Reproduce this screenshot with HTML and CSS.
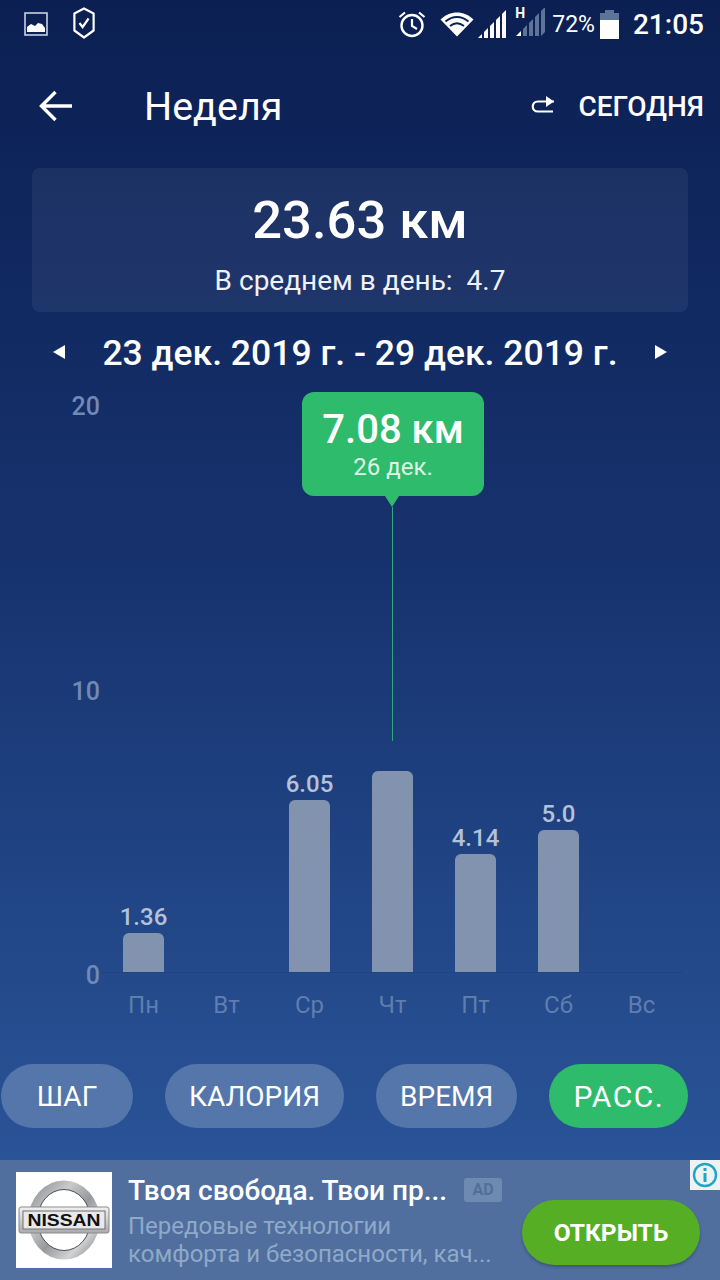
FILE: index.html
```html
<!DOCTYPE html>
<html lang="ru">
<head>
    <meta charset="UTF-8" />
    <meta name="viewport" content="width=device-width, initial-scale=1.0" />
    <title>Неделя</title>
    <link rel="stylesheet" href="styles.css">
</head>
<body>
    <div class="screen">
        <!-- Status bar -->
        <div class="status-bar">
            <div class="status-left">
                <svg class="ic-image" width="24" height="24" viewBox="0 0 24 24">
                    <rect x="1" y="1" width="22" height="22" fill="none" stroke="#c9d2e2" stroke-width="1.6"/>
                    <path d="M3 20v-5l4-3 4 2 3-3 4 1 3 4v4z" fill="#fff"/>
                </svg>
                <svg class="ic-shield" width="22" height="32" viewBox="0 0 24 32" preserveAspectRatio="none">
                    <path d="M12 1.500 22.500 6.500v17L12 30.500 1.500 23.500v-17z" fill="none" stroke="#fff" stroke-width="2.400" stroke-linejoin="round"/>
                    <path d="M7 16l3.500 4L17 11.500" fill="none" stroke="#fff" stroke-width="2.400"/>
                </svg>
            </div>
            <div class="status-right">
                <svg class="ic-alarm" width="28" height="28" viewBox="0 0 28 28">
                    <circle cx="14" cy="15.500" r="10.500" fill="none" stroke="#fff" stroke-width="2.400"/>
                    <path d="M14 9v7l5 3M1.500 7 7 2.500M26.500 7 21 2.500" fill="none" stroke="#fff" stroke-width="2.200"/>
                </svg>
                <svg class="ic-wifi" width="34" height="26" viewBox="0 0 34 26">
                    <path d="M17 25.500 0.500 8.500C10 -1 24 -1 33.500 8.500z" fill="#fff"/>
                    <path d="M5.500 10.500c7-6 16-6 23 0M10 15c4.500-3.500 9.500-3.500 14 0" fill="none" stroke="#0c2053" stroke-width="1.800"/>
                </svg>
                <svg class="ic-signal" width="28" height="28" viewBox="0 0 28 28">
                    <path d="M0 28 4 24v4zM6 28v-6l4-4v10zM12 28V16l4-4v16zM18 28V10l4-4v22zM24 28V4l4-4v28z" fill="#fff"/>
                </svg>
                <div class="signal-h">
                    <span class="h-mark">H</span>
                    <svg width="30" height="28" viewBox="0 0 30 28">
                        <path d="M0 28 5 23v5z" fill="#fff"/>
                        <path d="M7 28v-7l4-4v11zM13 28V15l4-4v17zM19 28V9l4-4v23zM25 28V3l4-4v25z" fill="#5f7398"/>
                    </svg>
                </div>
                <span class="battery-pct">72%</span>
                <div class="battery"><div class="battery-fill"></div></div>
                <span class="clock">21:05</span>
            </div>
        </div>

        <!-- Toolbar -->
        <div class="toolbar">
            <svg class="back" width="34" height="32" viewBox="0 0 34 32">
                <path d="M33 16H3M16.500 2 2.500 16l14 14" fill="none" stroke="#fff" stroke-width="3.400"/>
            </svg>
            <h1 class="title">Неделя</h1>
            <svg class="today-ic" width="24" height="18" viewBox="0 0 24 18">
                <path d="M23 5.500H7C0 5.500 0 15.500 7 15.500H22" fill="none" stroke="#fff" stroke-width="2.200"/>
                <path d="M15 0l8 5.500-8 5.500z" fill="#fff"/>
            </svg>
            <span class="today">СЕГОДНЯ</span>
        </div>

        <!-- Summary -->
        <div class="summary">
            <div class="summary-total">23.63 км</div>
            <div class="summary-avg">В среднем в день:&nbsp; 4.7</div>
        </div>

        <div class="date-row">
            <span class="tri tri-left"></span>
            <span class="date-text">23 дек. 2019 г. - 29 дек. 2019 г.</span>
            <span class="tri tri-right"></span>
        </div>

        <!-- Chart -->
        <div class="chart">
            <div class="y-axis">
                <span>20</span>
                <span>10</span>
                <span>0</span>
            </div>
            <div class="plot">
                <div class="col"><span class="val">1.36</span><div class="bar" style="height: 39px"></div></div>
                <div class="col"></div>
                <div class="col"><span class="val">6.05</span><div class="bar" style="height: 172px"></div></div>
                <div class="col"><div class="bar" style="height: 201px"></div></div>
                <div class="col"><span class="val">4.14</span><div class="bar" style="height: 118px"></div></div>
                <div class="col"><span class="val">5.0</span><div class="bar" style="height: 142px"></div></div>
                <div class="col"></div>

                <div class="guide"></div>
                <div class="tooltip">
                    <div class="tooltip-val">7.08 км</div>
                    <div class="tooltip-date">26 дек.</div>
                </div>
            </div>
            <div class="days">
                <span>Пн</span><span>Вт</span><span>Ср</span><span>Чт</span><span>Пт</span><span>Сб</span><span>Вс</span>
            </div>
        </div>

        <!-- Tabs -->
        <div class="tabs">
            <div class="tab">ШАГ</div>
            <div class="tab">КАЛОРИЯ</div>
            <div class="tab">ВРЕМЯ</div>
            <div class="tab tab-active">РАСС.</div>
        </div>

        <!-- Ad -->
        <div class="ad">
            <div class="ad-logo">
                <svg width="96" height="96" viewBox="0 0 96 96">
                    <defs>
                        <linearGradient id="chrome" x1="0" y1="0" x2="1" y2="1">
                            <stop offset="0" stop-color="#8e8f93"/>
                            <stop offset="0.3" stop-color="#c9cacc"/>
                            <stop offset="0.55" stop-color="#98999d"/>
                            <stop offset="0.8" stop-color="#d2d3d5"/>
                            <stop offset="1" stop-color="#8b8c90"/>
                        </linearGradient>
                        <linearGradient id="band" x1="0" y1="0" x2="0" y2="1">
                            <stop offset="0" stop-color="#f2f2f3"/>
                            <stop offset="1" stop-color="#a9aaad"/>
                        </linearGradient>
                    </defs>
                    <ellipse cx="48" cy="48" rx="31" ry="35" fill="none" stroke="url(#chrome)" stroke-width="9"/>
                    <ellipse cx="48" cy="48" rx="26.500" ry="30.500" fill="none" stroke="#4c4d51" stroke-width="1"/>
                    <rect x="3" y="35" width="90" height="26" rx="2" fill="url(#band)" stroke="#8a8b8f" stroke-width="1"/>
                    <rect x="7" y="39" width="82" height="18" fill="#e9e9ea" stroke="#707175" stroke-width="1"/>
                    <text class="nissan" x="48" y="54" text-anchor="middle" textLength="73" lengthAdjust="spacingAndGlyphs">NISSAN</text>
                </svg>
            </div>
            <div class="ad-text">
                <div class="ad-head">
                    <span class="ad-title">Твоя свобода. Твои пр...</span>
                    <span class="ad-badge">AD</span>
                </div>
                <div class="ad-body">Передовые технологии</div>
                <div class="ad-body">комфорта и безопасности, кач...</div>
            </div>
            <div class="ad-btn">ОТКРЫТЬ</div>
            <div class="ad-info">
                <svg width="26" height="26" viewBox="0 0 26 26">
                    <circle cx="13" cy="13" r="11" fill="none" stroke="#1fa6c4" stroke-width="2.400"/>
                    <path d="M11.500 6h3v3h-3zM11.500 11h3v9h-3z" fill="#1fa6c4"/>
                </svg>
            </div>
        </div>
    </div>
</body>
</html>
```

FILE: styles.css
```css
:root {
    --green: #2fbb6c;
    --axis: #6f8ab5;
    --day: #5f7eae;
}

body {
    margin: 0;
    padding: 0;
    font-family: Roboto, "Noto Sans", sans-serif;
    color: white;
}

.screen {
    width: 720px;
    height: 1280px;
    overflow: hidden;
    position: relative;
    background: linear-gradient(180deg, #0b1f52 0%, #17336f 45%, #2a5599 92%);
}

/* Status bar */
.status-bar {
    height: 48px;
    display: flex;
    justify-content: space-between;
    align-items: center;
    padding: 0 16px 0 24px;
}

.status-left {
    display: flex;
    align-items: center;
    gap: 25px;
}

.ic-image {
    margin-bottom: 1px;
}

.ic-shield {
    margin-bottom: 2px;
}

.status-right {
    display: flex;
    align-items: center;
}

.ic-alarm {
    margin-right: 14px;
}

.ic-wifi {
    margin-right: 4px;
}

.signal-h {
    position: relative;
    margin-left: 10px;
    margin-right: 6px;
}

.h-mark {
    position: absolute;
    top: -3px;
    left: -1px;
    font-size: 14px;
    font-weight: 700;
}

.battery-pct {
    font-size: 23px;
    margin-right: 5px;
}

.battery {
    width: 19px;
    height: 26px;
    margin-top: 3px;
    background: #5f7398;
    display: flex;
    align-items: flex-end;
    position: relative;
}

.battery::before {
    content: "";
    position: absolute;
    top: -3px;
    left: 5px;
    width: 9px;
    height: 3px;
    background: #5f7398;
}

.battery-fill {
    width: 100%;
    height: 19px;
    background: white;
}

.clock {
    font-size: 28px;
    font-weight: 500;
    margin-left: 14px;
}

/* Toolbar */
.toolbar {
    height: 116px;
    display: flex;
    align-items: center;
    padding: 0 16px 0 39px;
}

.title {
    flex: 1;
    margin: 0 0 0 71px;
    font-size: 39.500px;
    font-weight: 400;
}

.today-ic {
    margin-right: 23px;
    margin-bottom: 2px;
}

.today {
    font-size: 28px;
    font-weight: 500;
}

/* Summary */
.summary {
    height: 144px;
    margin: 4px 32px 0;
    box-sizing: border-box;
    padding-top: 22px;
    text-align: center;
    background-color: rgba(255, 255, 255, 0.06);
    border-radius: 8px;
}

.summary-total {
    font-size: 52.500px;
    font-weight: 500;
    line-height: 60px;
}

.summary-avg {
    margin-top: 15px;
    font-size: 28px;
    line-height: 32px;
    color: #eef1f6;
}

.date-row {
    height: 79px;
    display: flex;
    justify-content: space-between;
    align-items: center;
    padding: 0 53px;
}

.date-text {
    padding-top: 3px;
    font-size: 35.500px;
    font-weight: 500;
}

.tri {
    width: 0;
    height: 0;
    border-top: 7px solid transparent;
    border-bottom: 7px solid transparent;
}

.tri-left {
    border-right: 12px solid white;
}

.tri-right {
    border-left: 12px solid white;
}

/* Chart */
.chart {
    height: 673px;
    display: grid;
    grid-template-columns: 102px 581px;
    grid-template-rows: 581px auto;
}

.y-axis {
    grid-row: 1 / 3;
    height: 597px;
    margin-top: 2px;
    display: flex;
    flex-direction: column;
    justify-content: space-between;
    align-items: flex-end;
    padding-right: 2px;
    font-size: 25px;
    font-weight: 500;
    line-height: 28px;
    color: var(--axis);
}

.plot {
    position: relative;
    display: grid;
    grid-template-columns: repeat(7, 83px);
    height: 581px;
}

.col {
    display: flex;
    flex-direction: column;
    justify-content: flex-end;
    align-items: center;
    border-bottom: 1px solid rgba(20, 50, 110, 0.25);
    margin-bottom: -1px;
}

.bar {
    width: 41px;
    background-color: #8293b0;
    border-radius: 6px 6px 0 0;
}

.val {
    margin-bottom: 2px;
    font-size: 24px;
    font-weight: 500;
    line-height: 28px;
    color: #b4c2d9;
}

.guide {
    position: absolute;
    left: 290px;
    top: 116px;
    width: 1px;
    height: 234px;
    background-color: #2fa97c;
}

.tooltip {
    position: absolute;
    left: 200px;
    top: 1px;
    width: 182px;
    height: 104px;
    box-sizing: border-box;
    padding-top: 15px;
    text-align: center;
    background-color: var(--green);
    border-radius: 12px;
}

.tooltip::after {
    content: "";
    position: absolute;
    left: 83px;
    top: 104px;
    border-left: 7px solid transparent;
    border-right: 7px solid transparent;
    border-top: 11px solid var(--green);
}

.tooltip-val {
    font-size: 40px;
    font-weight: 500;
    line-height: 46px;
}

.tooltip-date {
    font-size: 24px;
    line-height: 28px;
    color: #dff5e8;
}

.days {
    grid-column: 2;
    display: grid;
    grid-template-columns: repeat(7, 83px);
    margin-top: 19px;
    font-size: 24px;
    line-height: 28px;
    text-align: center;
    color: var(--day);
}

/* Tabs */
.tabs {
    display: flex;
    gap: 32px;
    padding-left: 1px;
}

.tab {
    min-width: 132px;
    height: 64px;
    box-sizing: border-box;
    padding: 1px 24px 0;
    display: flex;
    justify-content: center;
    align-items: center;
    font-size: 28px;
    background-color: #5476ab;
    border-radius: 32px;
}

.tab-active {
    padding: 1px 0 0;
    width: 139px;
    font-size: 30px;
    letter-spacing: 1.500px;
    background-color: var(--green);
}

/* Ad */
.ad {
    position: relative;
    margin-top: 32px;
    height: 120px;
    display: flex;
    background-color: #506f9e;
}

.ad-logo {
    width: 96px;
    height: 96px;
    margin: 12px 16px;
    background-color: white;
}

.nissan {
    font-family: "Liberation Sans", sans-serif;
    font-size: 16px;
    font-weight: 700;
    fill: #111;
}

.ad-text {
    width: 390px;
}

.ad-head {
    display: flex;
    align-items: center;
    height: 32px;
    margin-top: 14px;
}

.ad-title {
    width: 336px;
    font-size: 28px;
    font-weight: 500;
    white-space: nowrap;
}

.ad-badge {
    width: 38px;
    height: 24px;
    font-size: 16px;
    font-weight: 700;
    line-height: 24px;
    text-align: center;
    color: #506f9e;
    background-color: #6d8ab0;
    border-radius: 3px;
}

.ad-body {
    font-size: 24px;
    line-height: 28px;
    white-space: nowrap;
    color: #8fa9c9;
}

.ad-head + .ad-body {
    margin-top: 6px;
}

.ad-btn {
    position: absolute;
    left: 522px;
    top: 40px;
    width: 178px;
    height: 65px;
    display: flex;
    justify-content: center;
    align-items: center;
    font-size: 24.500px;
    font-weight: 700;
    background-color: #55ae24;
    border-radius: 33px;
    box-shadow: 0 2px 3px rgba(20, 40, 80, 0.35);
}

.ad-info {
    position: absolute;
    right: 0;
    top: 0;
    width: 30px;
    height: 30px;
    display: flex;
    align-items: center;
    justify-content: center;
    background-color: #eef2f5;
}
```
